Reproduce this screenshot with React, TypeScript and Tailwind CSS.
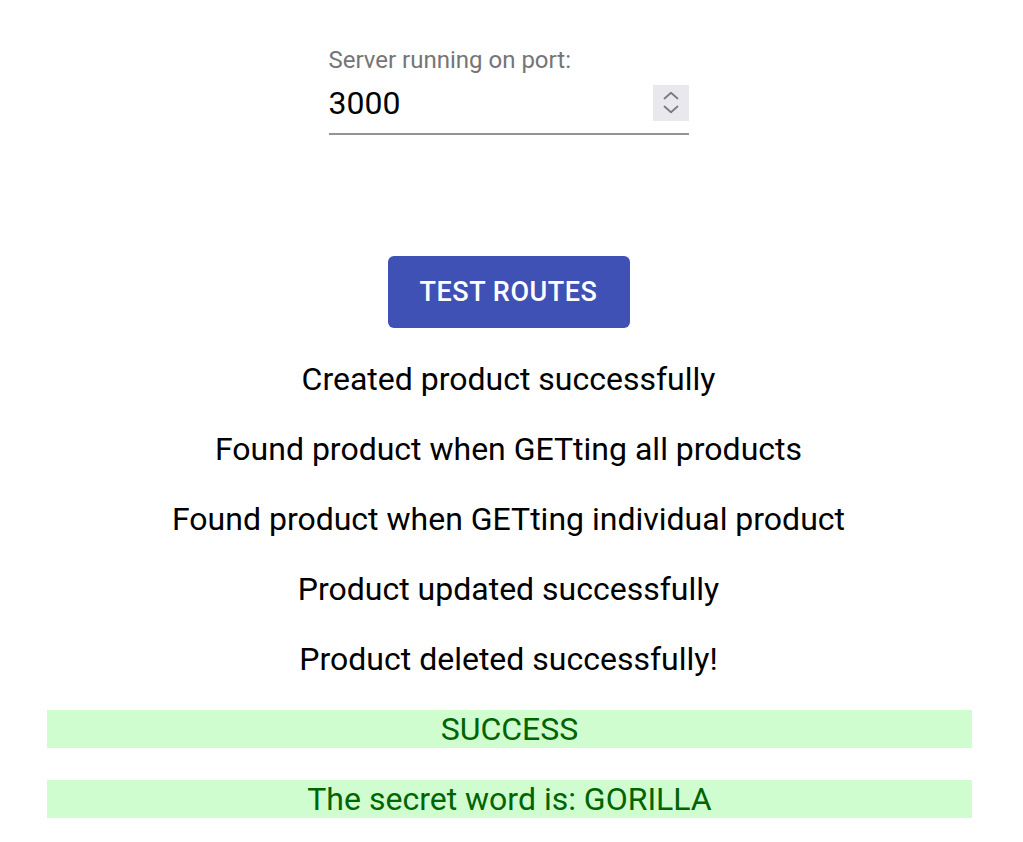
import React from "react";

const results = [
  "Created product successfully",
  "Found product when GETting all products",
  "Found product when GETting individual product",
  "Product updated successfully",
  "Product deleted successfully!",
];

export default function App() {
  return (
    <div className="min-h-screen bg-white pl-[47px] pr-[51px] font-['Roboto',sans-serif] text-black">
      <div className="flex flex-col items-center pr-[2px]">
        {/* port field */}
        <div className="mt-[46px] w-[360px]">
          <p className="h-[28px] text-[24px] leading-[28px] text-[#757575]">
            Server running on port:
          </p>
          <div className="mt-[6px] flex h-[46px] items-center justify-between">
            <span className="text-[32px] leading-[46px]">3000</span>
            <div className="flex h-[36px] w-[36px] items-center justify-center bg-[#e9e9ed]">
              <svg width="16" height="24" viewBox="0 0 16 24" fill="none" stroke="#7a7a85" strokeWidth="1.8" strokeLinecap="round" strokeLinejoin="round">
                <path d="M1.5 7.5 L8 1.8 L14.5 7.5" />
                <path d="M1.5 15.5 L8 21.2 L14.5 15.5" />
              </svg>
            </div>
          </div>
          <div className="mt-[7px] h-[2px] bg-[#949494]" />
        </div>

        <button className="mt-[121px] h-[72px] w-[242px] rounded-[6px] bg-[#3f51b5] text-[27px] font-medium uppercase tracking-[0.02em] text-white">
          Test Routes
        </button>

        <div className="mt-[30px] flex flex-col items-center gap-[28px]">
          {results.map((r) => (
            <p key={r} className="text-[32px] leading-[42px]">
              {r}
            </p>
          ))}
        </div>
      </div>

      <div className="mt-[30px] flex flex-col gap-[32px]">
        <div className="h-[38px] bg-[#d0fdd0] text-center text-[32px] leading-[38px] text-[#006400]">
          SUCCESS
        </div>
        <div className="h-[38px] bg-[#d0fdd0] text-center text-[32px] leading-[38px] text-[#006400]">
          The secret word is: GORILLA
        </div>
      </div>
    </div>
  );
}
